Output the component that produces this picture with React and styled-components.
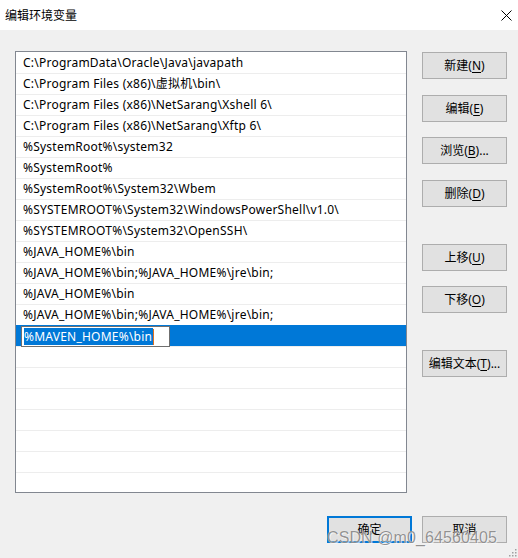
import React from "react";
import styled, { createGlobalStyle } from "styled-components";

const Global = createGlobalStyle`
  html, body { margin: 0; padding: 0; background: #f0f0f0; }
  body {
    font-family: "Noto Sans", "Noto Sans CJK SC", sans-serif;
    font-size: 12px;
    color: #000;
  }
`;

const Window = styled.div`
  position: relative;
  width: 518px;
  height: 558px;
  background: #f0f0f0;
  display: flex;
  flex-direction: column;
  overflow: hidden;
`;

const TitleBar = styled.div`
  height: 30px;
  flex: none;
  background: #fff;
  display: flex;
  align-items: center;
  justify-content: space-between;
  padding: 0 6px 0 5px;
  box-sizing: border-box;
`;

const Title = styled.span`
  font-family: "Noto Sans CJK SC", sans-serif;
  font-size: 12px;
  line-height: 16px;
`;

const CloseBtn = styled.span`
  width: 12px;
  height: 12px;
  display: flex;
  align-items: center;
  justify-content: center;
`;

const Body = styled.div`
  display: grid;
  grid-template-columns: 392px 85px;
  column-gap: 15px;
  padding: 21px 0 0 15px;
`;

const ListBox = styled.div`
  height: 442px;
  box-sizing: border-box;
  border: 1px solid #828790;
  background: #fff;
  padding-top: 1px;
  overflow: hidden;
`;

const Row = styled.div`
  height: 20px;
  border-bottom: 1px solid #ededed;
  display: flex;
  align-items: center;
  padding-left: ${(p) => (p.$editing ? "5px" : "7px")};
  padding-top: 1px;
  box-sizing: content-box;
  margin-top: -1px;
  background: ${(p) => (p.$selected ? "#0078d7" : "transparent")};
  white-space: nowrap;
  line-height: 16px;
  letter-spacing: 0.23px;
`;

const Editor = styled.div`
  width: 149px;
  height: 21px;
  margin-top: 1px;
  box-sizing: border-box;
  border: 1px solid #6f6f6f;
  background: #fff;
  display: flex;
  align-items: center;
  padding-left: 2px;
`;

const Selection = styled.span`
  background: #0078d7;
  color: #fff;
  line-height: 17px;
  padding-right: 1px;
`;

const Caret = styled.span`
  width: 1px;
  height: 16px;
  background: #e07020;
`;

const ButtonColumn = styled.div`
  display: flex;
  flex-direction: column;
  padding-top: 1px;
`;

const Button = styled.button`
  width: 85px;
  height: 27px;
  margin-top: ${(p) => p.$gap || 0}px;
  box-sizing: border-box;
  background: #e1e1e1;
  border: ${(p) => (p.$focused ? "2px solid #0078d7" : "1px solid #adadad")};
  border-radius: 0;
  padding: 0;
  font-family: "Noto Sans", "Noto Sans CJK SC", sans-serif;
  font-size: 12px;
  color: #000;
  display: flex;
  align-items: center;
  justify-content: center;
  line-height: 16px;
  u { text-decoration-thickness: 1px; text-underline-offset: 2px; }
`;

const Footer = styled.div`
  display: flex;
  justify-content: flex-end;
  gap: 10px;
  padding: 23px 11px 0 0;
`;

const Watermark = styled.div`
  position: absolute;
  left: 327px;
  top: 529px;
  font-family: "Liberation Sans", Arial, sans-serif;
  font-size: 16px;
  line-height: 18px;
  letter-spacing: 0.1px;
  color: rgba(110, 110, 110, 0.75);
  text-shadow: 0 0 1px #fff, 1px 1px 0 rgba(255,255,255,0.6);
  white-space: nowrap;
  pointer-events: none;
`;

const Grip = styled.svg`
  position: absolute;
  right: 1px;
  bottom: 1px;
`;

const paths = [
  "C:\\ProgramData\\Oracle\\Java\\javapath",
  "C:\\Program Files (x86)\\虚拟机\\bin\\",
  "C:\\Program Files (x86)\\NetSarang\\Xshell 6\\",
  "C:\\Program Files (x86)\\NetSarang\\Xftp 6\\",
  "%SystemRoot%\\system32",
  "%SystemRoot%",
  "%SystemRoot%\\System32\\Wbem",
  "%SYSTEMROOT%\\System32\\WindowsPowerShell\\v1.0\\",
  "%SYSTEMROOT%\\System32\\OpenSSH\\",
  "%JAVA_HOME%\\bin",
  "%JAVA_HOME%\\bin;%JAVA_HOME%\\jre\\bin;",
  "%JAVA_HOME%\\bin",
  "%JAVA_HOME%\\bin;%JAVA_HOME%\\jre\\bin;",
];

const sideButtons = [
  { label: "新建", key: "N", gap: 0 },
  { label: "编辑", key: "E", gap: 16 },
  { label: "浏览", key: "B", gap: 15, dots: true },
  { label: "删除", key: "D", gap: 16 },
  { label: "上移", key: "U", gap: 37 },
  { label: "下移", key: "O", gap: 15 },
  { label: "编辑文本", key: "T", gap: 37, dots: true },
];

export default function App() {
  return (
    <>
      <Global />
      <Window>
        <TitleBar>
          <Title>编辑环境变量</Title>
          <CloseBtn>
            <svg width="11" height="11" viewBox="0 0 11 11">
              <path d="M0.5 0.5 L10.5 10.5 M10.5 0.5 L0.5 10.5" stroke="#000" strokeWidth="1" fill="none" />
            </svg>
          </CloseBtn>
        </TitleBar>
        <Body>
          <ListBox>
            {paths.map((p, i) => (
              <Row key={i}>{p}</Row>
            ))}
            <Row $selected $editing>
              <Editor>
                <Selection>%MAVEN_HOME%\bin</Selection>
                <Caret />
              </Editor>
            </Row>
            {Array.from({ length: 7 }).map((_, i) => (
              <Row key={"e" + i} />
            ))}
          </ListBox>
          <ButtonColumn>
            {sideButtons.map((b) => (
              <Button key={b.key} $gap={b.gap}>
                {b.label}(<u>{b.key}</u>){b.dots ? "..." : ""}
              </Button>
            ))}
          </ButtonColumn>
        </Body>
        <Footer>
          <Button $focused>确定</Button>
          <Button>取消</Button>
        </Footer>
        <Watermark>CSDN @m0_64560405</Watermark>
        <Grip width="10" height="10" viewBox="0 0 10 10">
          {[[8, 2], [8, 5], [5, 5], [8, 8], [5, 8], [2, 8]].map(([x, y], i) => (
            <rect key={i} x={x} y={y} width="1.5" height="1.5" fill="#a0a0a0" />
          ))}
        </Grip>
      </Window>
    </>
  );
}
